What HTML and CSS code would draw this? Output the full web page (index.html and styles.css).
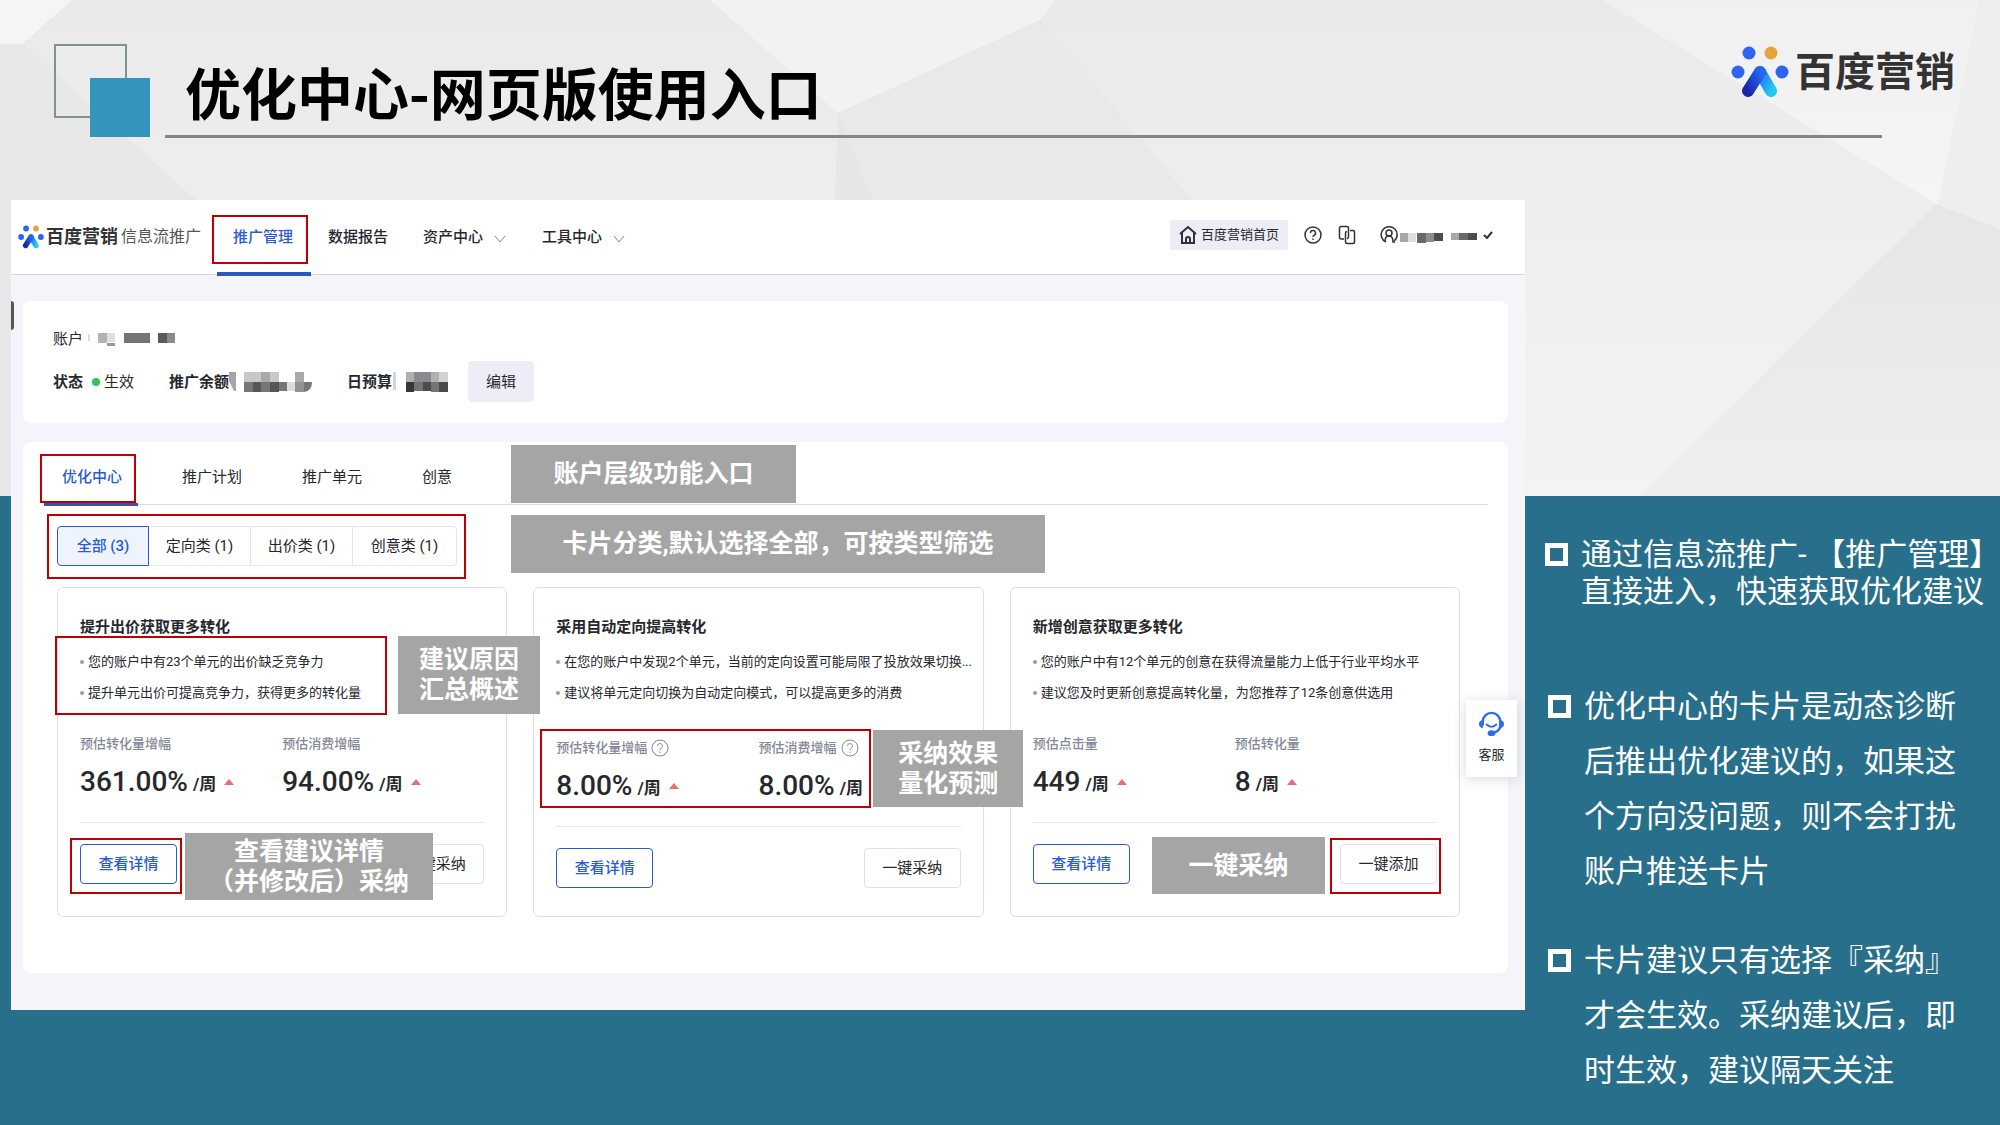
FILE: index.html
```html
<!DOCTYPE html>
<html lang="zh-CN">
<head>
<meta charset="utf-8">
<title>优化中心-网页版使用入口</title>
<meta name="viewport" content="width=device-width, initial-scale=1">
<link rel="stylesheet" href="styles.css">
</head>
<body>
<svg class="backdrop" viewBox="0 0 2000 496" preserveAspectRatio="none" aria-hidden="true">
  <defs>
    <linearGradient id="base" x1="0" y1="0" x2="0" y2="1"><stop offset="0" stop-color="#eaeaea"/><stop offset="1" stop-color="#f3f3f3"/></linearGradient>
    <linearGradient id="lite" x1="0" y1="0" x2="0" y2="1"><stop offset="0" stop-color="#f0f0f0"/><stop offset="1" stop-color="#f5f5f5"/></linearGradient>
    <linearGradient id="shade" x1="0" y1="0" x2="0" y2="1"><stop offset="0" stop-color="#e6e6e8"/><stop offset="1" stop-color="#eeeeee"/></linearGradient>
  </defs>
  <rect width="2000" height="496" fill="url(#base)"/>
  <path d="M0 0H72L22 44H0Z" fill="#f5f5f5"/>
  <path d="M0 44H22L196 200V496H0Z" fill="#e8e8e9"/>
  <path d="M710 0H1056L1040 20L838 113Z" fill="#f2f2f2"/>
  <path d="M1040 20L838 113L835 200H1192Z" fill="#e9e9ea"/>
  <path d="M838 113L872 200H835Z" fill="#e6e6e8"/>
  <path d="M1602 0H1980L1938 205Z" fill="url(#lite)"/>
  <path d="M1980 0H2000V229L1938 205Z" fill="#eeeeee"/>
  <path d="M1936 204L2000 229V496H1640Z" fill="url(#shade)"/>
</svg>

<header class="slide-head">
  <span class="squares" aria-hidden="true"></span>
  <h1 class="slide-title">优化中心-网页版使用入口</h1>
  <div class="brand">
    <svg class="brand-mark" viewBox="0 0 58 52" aria-hidden="true">
      <defs>
        <linearGradient id="legL" x1="1" y1="0" x2="0" y2="1"><stop offset="0" stop-color="#2468f2"/><stop offset="1" stop-color="#1a24a8"/></linearGradient>
        <linearGradient id="legR" x1="0" y1="0" x2="1" y2="1"><stop offset="0" stop-color="#2468f2"/><stop offset="1" stop-color="#22c8f0"/></linearGradient>
      </defs>
      <g id="mark">
        <circle cx="18" cy="7" r="6.5" fill="#2f63f5"/><circle cx="40" cy="7" r="6.5" fill="#e3a53c"/>
        <circle cx="7" cy="26" r="6.5" fill="#2f63f5"/><circle cx="51" cy="26" r="6.5" fill="#2f63f5"/>
        <path d="M29 26L40 45" stroke="url(#legR)" stroke-width="12" stroke-linecap="round"/>
        <path d="M29 26L17 45" stroke="url(#legL)" stroke-width="12" stroke-linecap="round"/>
      </g>
    </svg>
    <span class="brand-name">百度营销</span>
  </div>
</header>

<main class="slide-body">
  <section class="app">
    <span class="drawer-handle" aria-hidden="true"></span>
    <header class="app-head">
      <a class="app-logo" href="#">
        <svg class="app-mark" viewBox="0 0 58 52" aria-hidden="true"><use href="#mark"/></svg>
        <strong>百度营销</strong><span>信息流推广</span>
      </a>
      <nav class="app-nav">
        <a class="nav-item is-active" href="#">推广管理<span class="mark mark-nav"></span></a>
        <a class="nav-item" href="#">数据报告</a>
        <a class="nav-item" href="#">资产中心<svg class="chevron" viewBox="0 0 12 8"><path d="M1 1L6 7L11 1"/></svg></a>
        <a class="nav-item" href="#">工具中心<svg class="chevron" viewBox="0 0 12 8"><path d="M1 1L6 7L11 1"/></svg></a>
      </nav>
      <div class="app-tools">
        <a class="home-link" href="#"><svg class="icon" viewBox="0 0 18 20"><path d="M1 9L9 2L17 9M3 8V18H15V8M7 18V14a2 2 0 0 1 4 0V18"/></svg>百度营销首页</a>
        <button class="icon-button" type="button" aria-label="帮助"><svg class="icon" viewBox="0 0 18 20"><circle cx="9" cy="10" r="8"/><path d="M6.500 8a2.500 2.500 0 1 1 3.500 2.300Q9 10.800 9 12M9 13.500V15"/></svg></button>
        <button class="icon-button" type="button" aria-label="切换"><svg class="icon" viewBox="0 0 18 20"><path d="M6 14H3a1.500 1.500 0 0 1-1.500-1.500V3A1.500 1.500 0 0 1 3 1.500H9A1.500 1.500 0 0 1 10.500 3V12a1.500 1.500 0 0 1-1.500 1.500M12 5.500H15A1.500 1.500 0 0 1 16.500 7V17A1.500 1.500 0 0 1 15 18.500H9A1.500 1.500 0 0 1 7.500 17V8A1.500 1.500 0 0 1 9 6.500"/></svg></button>
        <button class="account-button" type="button" aria-label="账户菜单">
          <svg class="icon" viewBox="0 0 18 20"><path d="M6 17A8 8 0 1 1 14 16"/><circle cx="9" cy="8" r="3"/><path d="M5 16Q5 11 9 11Q13 11 13 17H15"/></svg>
          <svg class="mosaic mosaic-user" width="78" height="12" viewBox="0 0 78 12"><path fill="#a8a8aa" d="M0 1h8v9H0zM51 1h8v7h-8z"/><path fill="#dedee0" d="M8 1h8v9H8z"/><path fill="#69696d" d="M17 1h9v10h-9zM59 1h9v7h-9z"/><path fill="#8d8d90" d="M26 1h8v9h-8z"/><path fill="#4c4c50" d="M34 1h9v8h-9zM68 1h9v7h-9z"/></svg>
          <svg class="tick" viewBox="0 0 10 8"><path d="M1 4L4 7L9 1"/></svg>
        </button>
      </div>
    </header>

    <div class="app-content">
      <section class="panel account">
        <div class="account-row">账户
          <svg class="mosaic" width="88" height="14" viewBox="0 0 88 14"><path fill="#dcdcde" d="M0 2h2v7H0z"/><path fill="#b4b4b6" d="M10 1h9v10h-9z"/><path fill="#dfdfe1" d="M19 1h8v9h-8z"/><path fill="#9a9a9c" d="M19 11h8v3h-8z"/><path fill="#747478" d="M36 1h26v10H36z"/><path fill="#59595e" d="M70 1h9v10h-9z"/><path fill="#8b8b8e" d="M79 1h8v10h-8z"/></svg>
        </div>
        <div class="account-row account-stats">
          <span class="stat"><b>状态</b><i class="status-dot"></i>生效</span>
          <span class="stat"><b>推广余额</b><svg class="mosaic" width="83" height="22" viewBox="0 0 83 22"><path fill="#a5a5a8" d="M0 1h7v19H5L0 10z"/><path fill="#c8c8ca" d="M15 1h17v10H15zM41 1h9v10h-9z"/><path fill="#a9a9ac" d="M32 1h9v10h-9zM66 1h9v10h-9z"/><path fill="#77777b" d="M15 11h9v10h-9zM32 11h9v10h-9zM50 11h8v9h-8zM75 11h8q0 9-8 10z"/><path fill="#56565a" d="M24 11h8v10h-8zM41 11h9v10h-9z"/><path fill="#dcdcde" d="M58 11h8v9h-8z"/><path fill="#929296" d="M66 11h9v10h-9z"/></svg></span>
          <span class="stat"><b>日预算</b><svg class="mosaic" width="56" height="22" viewBox="0 0 56 22"><path fill="#d5d5d8" d="M1 1h3v18H1z"/><path fill="#b0b0b3" d="M14 1h8v10h-8zM39 1h8v10h-8z"/><path fill="#8a8a8e" d="M22 1h17v10H22z"/><path fill="#d3d3d5" d="M47 1h9v10h-9z"/><path fill="#36363b" d="M14 11h8v10h-8z"/><path fill="#737378" d="M22 11h9v9h-9zM39 11h8v10h-8z"/><path fill="#4a4a4f" d="M31 11h8v9h-8zM47 11h9v10h-9z"/></svg></span>
          <button class="edit-button" type="button">编辑</button>
        </div>
      </section>

      <section class="panel center">
        <nav class="tabs">
          <a class="tab is-active" href="#">优化中心<span class="mark mark-tab"></span></a>
          <a class="tab" href="#">推广计划</a>
          <a class="tab" href="#">推广单元</a>
          <a class="tab" href="#">创意</a>
          <span class="note note-tabs">账户层级功能入口</span>
        </nav>
        <div class="filter-bar">
          <div class="filters">
            <button class="filter is-active" type="button">全部 (3)</button>
            <button class="filter" type="button">定向类 (1)</button>
            <button class="filter" type="button">出价类 (1)</button>
            <button class="filter" type="button">创意类 (1)</button>
            <span class="mark mark-filters"></span>
          </div>
          <span class="note note-filters">卡片分类,默认选择全部，可按类型筛选</span>
        </div>

        <div class="cards">
          <article class="card">
            <h2 class="card-title">提升出价获取更多转化</h2>
            <div class="anchor">
              <ul class="reasons"><li>您的账户中有23个单元的出价缺乏竞争力</li><li>提升单元出价可提高竞争力，获得更多的转化量</li></ul>
              <span class="mark mark-reasons"></span>
              <span class="note note-reasons">建议原因<br>汇总概述</span>
            </div>
            <dl class="metrics">
              <div><dt>预估转化量增幅</dt><dd>361.00%<small>/周</small><i class="up"></i></dd></div>
              <div><dt>预估消费增幅</dt><dd>94.00%<small>/周</small><i class="up"></i></dd></div>
            </dl>
            <div class="actions">
              <button class="button button-primary" type="button">查看详情</button>
              <button class="button" type="button">一键采纳</button>
              <span class="mark mark-detail"></span>
              <span class="note note-detail">查看建议详情<br>（并修改后）采纳</span>
            </div>
          </article>

          <article class="card">
            <h2 class="card-title">采用自动定向提高转化</h2>
            <div class="anchor">
              <ul class="reasons"><li>在您的账户中发现2个单元，当前的定向设置可能局限了投放效果切换...</li><li>建议将单元定向切换为自动定向模式，可以提高更多的消费</li></ul>
            </div>
            <dl class="metrics">
              <div><dt>预估转化量增幅<svg class="hint" viewBox="0 0 18 20"><circle cx="9" cy="10" r="8"/><path d="M6.500 8a2.500 2.500 0 1 1 3.500 2.300Q9 10.800 9 12M9 13.500V15"/></svg></dt><dd>8.00%<small>/周</small><i class="up"></i></dd></div>
              <div><dt>预估消费增幅<svg class="hint" viewBox="0 0 18 20"><circle cx="9" cy="10" r="8"/><path d="M6.500 8a2.500 2.500 0 1 1 3.500 2.300Q9 10.800 9 12M9 13.500V15"/></svg></dt><dd>8.00%<small>/周</small></dd></div>
              <div class="overlay"><span class="mark mark-effect"></span><span class="note note-effect">采纳效果<br>量化预测</span></div>
            </dl>
            <div class="actions">
              <button class="button button-primary" type="button">查看详情</button>
              <button class="button" type="button">一键采纳</button>
            </div>
          </article>

          <article class="card">
            <h2 class="card-title">新增创意获取更多转化</h2>
            <div class="anchor">
              <ul class="reasons"><li>您的账户中有12个单元的创意在获得流量能力上低于行业平均水平</li><li>建议您及时更新创意提高转化量，为您推荐了12条创意供选用</li></ul>
            </div>
            <dl class="metrics">
              <div><dt>预估点击量</dt><dd>449<small>/周</small><i class="up"></i></dd></div>
              <div><dt>预估转化量</dt><dd>8<small>/周</small><i class="up"></i></dd></div>
            </dl>
            <div class="actions">
              <button class="button button-primary" type="button">查看详情</button>
              <button class="button" type="button">一键添加</button>
              <span class="mark mark-adopt"></span>
              <span class="note note-adopt">一键采纳</span>
            </div>
          </article>
        </div>
      </section>
    </div>

    <button class="service" type="button">
      <svg class="service-icon" viewBox="0 0 28 28" aria-hidden="true"><path d="M5 16V12a9 9 0 0 1 18 0V16Q23 22 15 24" fill="none" stroke="#2b6cf3" stroke-width="2.500"/><path d="M5 10Q1 11 1 14.500T5 19ZM23 10Q27 11 27 14.500T23 19Z" fill="#2b6cf3"/><path d="M9 15Q14 20 19 15" fill="none" stroke="#2b6cf3" stroke-width="2" stroke-linecap="round"/><ellipse cx="14" cy="24" rx="4" ry="3" fill="#2b6cf3"/></svg>
      客服
    </button>
  </section>

  <aside class="points">
    <ul class="point-list">
      <li class="point point-tight">通过信息流推广- 【推广管理】<br>直接进入，快速获取优化建议</li>
      <li class="point">优化中心的卡片是动态诊断后推出优化建议的，如果这个方向没问题，则不会打扰账户推送卡片</li>
      <li class="point">卡片建议只有选择『采纳』才会生效。采纳建议后，即时生效，建议隔天关注</li>
    </ul>
  </aside>
</main>
</body>
</html>
```
FILE: styles.css
```css
*, *::before, *::after { box-sizing: border-box; }

body {
  margin: 0;
  min-height: 100vh;
  position: relative;
  overflow-x: hidden;
  background: #276f8b;
  color: #26282e;
  font-family: Roboto, "Noto Sans CJK SC", sans-serif;
  font-size: 15px;
  line-height: 20px;
}

a { color: inherit; text-decoration: none; }
button { font: inherit; color: inherit; cursor: pointer; }
ul, dl, dd, h1, h2 { margin: 0; padding: 0; }
ul { list-style: none; }

.backdrop { position: absolute; top: 0; left: 0; width: 100%; height: 496px; z-index: -1; }

/* slide heading */
.slide-head {
  position: relative;
  display: flex;
  align-items: flex-start;
  height: 200px;
  padding: 44px 45px 0 54px;
}
.slide-head::after {
  content: "";
  position: absolute;
  left: 165px;
  right: 118px;
  top: 135px;
  height: 3px;
  background: #858585;
}
.squares { position: relative; width: 96px; height: 93px; flex: none; }
.squares::before, .squares::after { content: ""; position: absolute; }
.squares::before { left: 0; top: 0; width: 73px; height: 74px; border: 2px solid #809094; }
.squares::after { right: 0; bottom: 0; width: 60px; height: 59px; background: #3594bb; }
.slide-title {
  margin-left: 35px;
  color: #000;
  font-family: "Noto Sans CJK SC", sans-serif;
  font-size: 56px;
  line-height: 94px;
  font-weight: 700;
}
.brand { display: flex; align-items: flex-start; gap: 6px; margin-left: auto; }
.brand-mark { width: 58px; height: 52px; margin-top: 2px; fill: none; }
.brand-name {
  color: #333;
  font-family: "Noto Sans CJK SC", sans-serif;
  font-size: 40px;
  line-height: 50px;
  font-weight: 700;
}

.slide-body {
  display: grid;
  grid-template-columns: minmax(0, 1fr) 475px;
  align-items: start;
  padding-left: 11px;
}

/* product window */
.app { position: relative; background: #f4f4fa; }
.drawer-handle { position: absolute; left: 0; top: 101px; width: 3px; height: 29px; background: #55565a; border-radius: 0 3px 3px 0; }
.app-head {
  display: flex;
  align-items: center;
  height: 75px;
  padding: 0 32px 0 7px;
  background: #fff;
  border-bottom: 1px solid #d6d8e0;
}
.app-logo { display: flex; align-items: center; width: 215px; white-space: nowrap; font-size: 16px; color: #55565a; }
.app-logo strong { margin-right: 3px; font-size: 18px; color: #333; }
.app-mark { width: 26px; height: 26px; margin-right: 2px; fill: none; }
.app-nav { display: flex; gap: 35px; height: 74px; font-weight: 500; }
.nav-item { position: relative; display: flex; align-items: center; }
.nav-item.is-active { color: #2a5bd7; }
.nav-item.is-active::after { content: ""; position: absolute; left: -16px; right: -18px; bottom: -2px; height: 4px; background: #2a58c0; }
.chevron { width: 12px; height: 8px; margin: 3px 1px 0 11px; fill: none; stroke: #808289; stroke-width: 1; }
.app-tools { display: flex; align-items: center; gap: 16px; margin: -4px 0 0 auto; }
.icon { width: 18px; height: 20px; fill: none; stroke: #303238; stroke-width: 2; }
.icon-button .icon, .account-button .icon { stroke-width: 1.5; }
.home-link { display: flex; align-items: center; gap: 4px; height: 30px; padding: 0 9px; background: #ededf7; border-radius: 2px; font-size: 13px; }
.icon-button, .account-button { display: flex; align-items: center; padding: 0; border: 0; background: none; }
.account-button { gap: 2px; margin-left: 8px; }
.tick { width: 10px; height: 8px; margin-left: 3px; fill: none; stroke: #303238; stroke-width: 2; }
.mosaic { flex: none; }
.mosaic-user { margin-top: 6px; }

.app-content { display: grid; gap: 19px; padding: 26px 17px 37px 12px; }
.panel { background: #fff; border-radius: 8px; }
.account { display: grid; gap: 12px; padding: 28px 30px 21px; }
.account-row { display: flex; align-items: center; gap: 5px; }
.account-stats { gap: 35px; }
.stat { display: flex; align-items: center; }
.status-dot { width: 8px; height: 8px; margin: 0 4px 0 9px; border-radius: 50%; background: #30c452; }
.edit-button { width: 66px; height: 41px; margin-left: -15px; padding: 0; border: 0; border-radius: 4px; background: #ededf7; }

.center { padding-bottom: 56px; }
.tabs {
  position: relative;
  display: flex;
  gap: 60px;
  margin: 0 20px 0 21px;
  padding: 25px 18px 17px;
  border-bottom: 1px solid #dcdde8;
}
.tab { position: relative; }
.tab.is-active { color: #2a5bd7; font-weight: 500; }
.tab.is-active::after { content: ""; position: absolute; left: -18px; right: -16px; bottom: -19px; height: 3px; background: #3a4fb5; }

.filter-bar { position: relative; display: flex; padding: 21px 34px; }
.filters { position: relative; display: flex; }
.filter { width: 103px; height: 40px; margin-left: -1px; padding: 0; border: 1px solid #e3e4ee; background: #fff; }
.filter:first-child { width: 92px; margin-left: 0; border-radius: 4px 0 0 4px; }
.filter:nth-child(4) { width: 105px; border-radius: 0 4px 4px 0; }
.filter.is-active { position: relative; border-color: #2a5bd7; background: #eef3fe; color: #2a5bd7; font-weight: 500; }

/* recommendation cards */
.cards { display: grid; grid-template-columns: repeat(3, minmax(0, 1fr)); gap: 26px; padding: 0 48px 0 34px; }
.card { display: flex; flex-direction: column; padding: 27px 22px 28px; border: 1px solid #dddfe8; border-radius: 6px; }
.card-title { font-size: 15px; line-height: 24px; font-weight: 700; }
.anchor { position: relative; margin-top: 7px; }
.reasons { font-size: 13px; line-height: 31px; white-space: nowrap; }
.reasons li { display: flex; align-items: center; gap: 4px; }
.reasons li::before { content: ""; flex: none; width: 4px; height: 4px; border-radius: 50%; background: #999ba3; }
.metrics { position: relative; display: grid; grid-template-columns: 1fr 1fr; margin: 26px 0 22px; }
.metrics dt { display: flex; align-items: flex-end; font-size: 13px; font-weight: 500; color: #858997; }
.hint { width: 18px; height: 24px; margin-left: 4px; padding-top: 4px; fill: none; stroke: #858997; stroke-width: 1; }
.metrics dd { display: flex; align-items: center; margin-top: 10px; font-size: 28px; line-height: 36px; font-weight: 500; white-space: nowrap; }
.metrics small { margin: 4px 0 0 5px; font-size: 17px; line-height: 32px; font-weight: 700; }
.up { margin-left: 8px; border: 5px solid transparent; border-top: 0; border-bottom: 6px solid #ef6a75; }
.actions { position: relative; display: flex; justify-content: space-between; padding-top: 21px; border-top: 1px solid #e6e7ed; }
.button { width: 97px; height: 40px; padding: 0; border: 1px solid #e0e1e8; border-radius: 4px; background: #fff; }
.button-primary { border-color: #2a5bd7; color: #2a5bd7; font-weight: 500; }

.service {
  position: absolute;
  right: 8px;
  top: 500px;
  display: flex;
  flex-direction: column;
  align-items: center;
  width: 51px;
  padding: 10px 0 12px;
  border: 0;
  background: #fff;
  box-shadow: 0 2px 12px rgba(60, 70, 100, .2);
  font-size: 13px;
}
.service-icon { width: 27px; height: 27px; margin-bottom: 8px; }

/* annotations laid over the product window */
.mark, .note { position: absolute; z-index: 2; pointer-events: none; }
.mark { border: 2px solid #c00000; }
.note {
  display: flex;
  align-items: center;
  justify-content: center;
  background: #a5a5a5;
  color: #fff;
  font-size: 25px;
  line-height: 30px;
  font-weight: 700;
  text-align: center;
  white-space: nowrap;
}
.mark-nav { left: -21px; right: -15px; top: 15px; height: 49px; }
.mark-tab { left: -22px; right: -14px; top: -13px; bottom: -16px; }
.mark-filters { left: -10px; right: -9px; top: -12px; bottom: -13px; }
.mark-reasons { left: -25px; width: 332px; top: -10px; bottom: -7px; }
.mark-detail { left: -10px; width: 112px; top: 15px; height: 56px; }
.mark-effect { left: -16px; width: 331px; top: -5px; height: 79px; }
.mark-adopt { right: -4px; width: 111px; top: 15px; height: 56px; }
.note-tabs { left: 467px; top: 3px; width: 285px; height: 58px; }
.note-filters { left: 488px; top: 10px; width: 534px; height: 58px; }
.note-reasons { left: 318px; top: -10px; width: 142px; height: 78px; }
.note-detail { left: 105px; top: 10px; width: 248px; height: 67px; }
.note-effect { left: 317px; top: -4px; width: 150px; height: 77px; }
.note-adopt { right: 112px; top: 14px; width: 173px; height: 57px; }
.overlay { position: absolute; inset: 0; }

/* talking points */
.points { padding: 336px 0 24px 20px; color: #fff; font-size: 31px; line-height: 55px; }
.point { position: relative; margin: 0 0 34px 3px; padding: 0 40px 0 36px; }
.point:last-child { margin-bottom: 0; }
.point-tight { margin: 0 0 69px; padding-right: 0; line-height: 37px; white-space: nowrap; }
.point::before { content: ""; position: absolute; left: 0; top: 16px; width: 23px; height: 23px; border: 5px solid #fff; }
.point-tight::before { top: 7px; }
```
